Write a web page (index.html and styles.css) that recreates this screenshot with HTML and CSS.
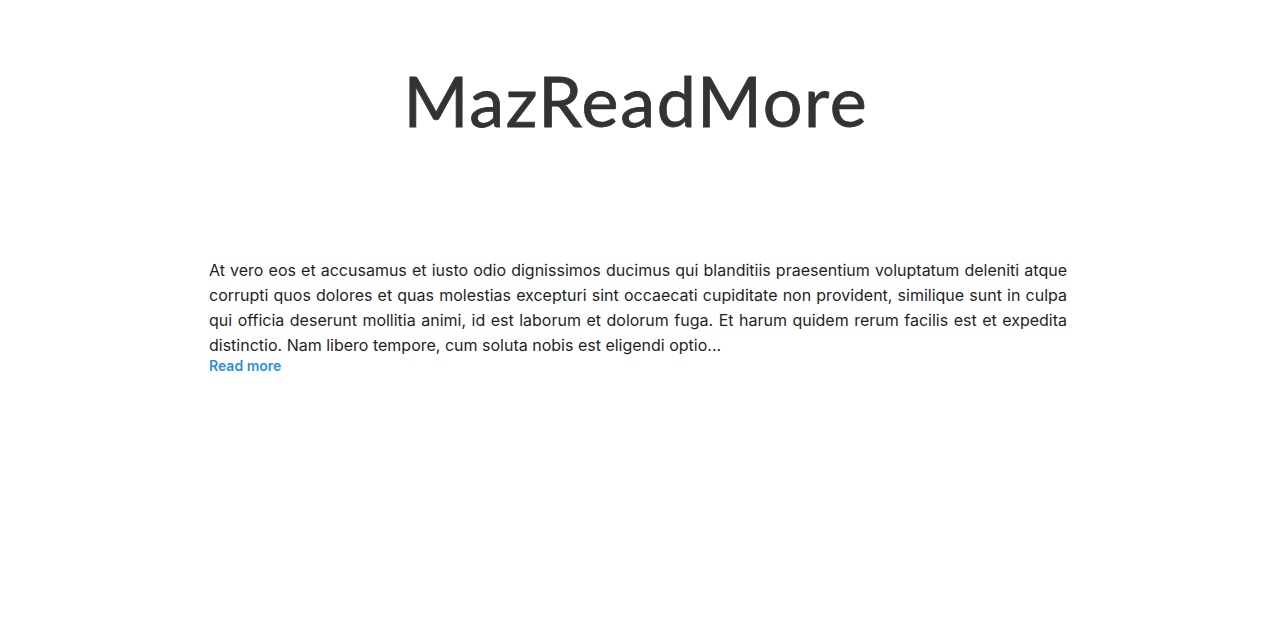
FILE: index.html
```html
<!DOCTYPE html>
<html lang="en">
<head>
<meta charset="utf-8">
<title>MazReadMore</title>
<link rel="stylesheet" href="styles.css">
</head>
<body>
<main class="page">
  <h1 class="title">MazReadMore</h1>
  <section class="content">
    <p class="text">At vero eos et accusamus et iusto odio dignissimos ducimus qui blanditiis praesentium voluptatum deleniti atque corrupti quos dolores et quas molestias excepturi sint occaecati cupiditate non provident, similique sunt in culpa qui officia deserunt mollitia animi, id est laborum et dolorum fuga. Et harum quidem rerum facilis est et expedita distinctio. Nam libero tempore, cum soluta nobis est eligendi optio...</p>
    <a class="more" href="#">Read more</a>
  </section>
</main>
</body>
</html>
```
FILE: styles.css
```css
html, body {
  margin: 0;
  padding: 0;
  background: #fff;
}
.page {
  display: flex;
  flex-direction: column;
  align-items: center;
  padding-top: 52px;
}
.title {
  margin: 0 8px 0 0;
  font-family: "Lato", sans-serif;
  font-weight: 400;
  font-size: 70px;
  letter-spacing: 1.7px;
  line-height: 96px;
  color: #333333;
  -webkit-text-stroke: 0.8px #333333;
}
.content {
  width: 858px;
  margin-top: 110px;
  margin-left: -4px;
}
.text {
  margin: 0;
  font-family: Inter, sans-serif;
  font-size: 16px;
  line-height: 25px;
  color: #1f1f1f;
  text-align: justify;
}
.more {
  display: block;
  margin-top: -1px;
  font-family: Inter, sans-serif;
  font-size: 14px;
  font-weight: 600;
  line-height: 18px;
  color: #2b8fea;
  text-decoration: none;
}
```
